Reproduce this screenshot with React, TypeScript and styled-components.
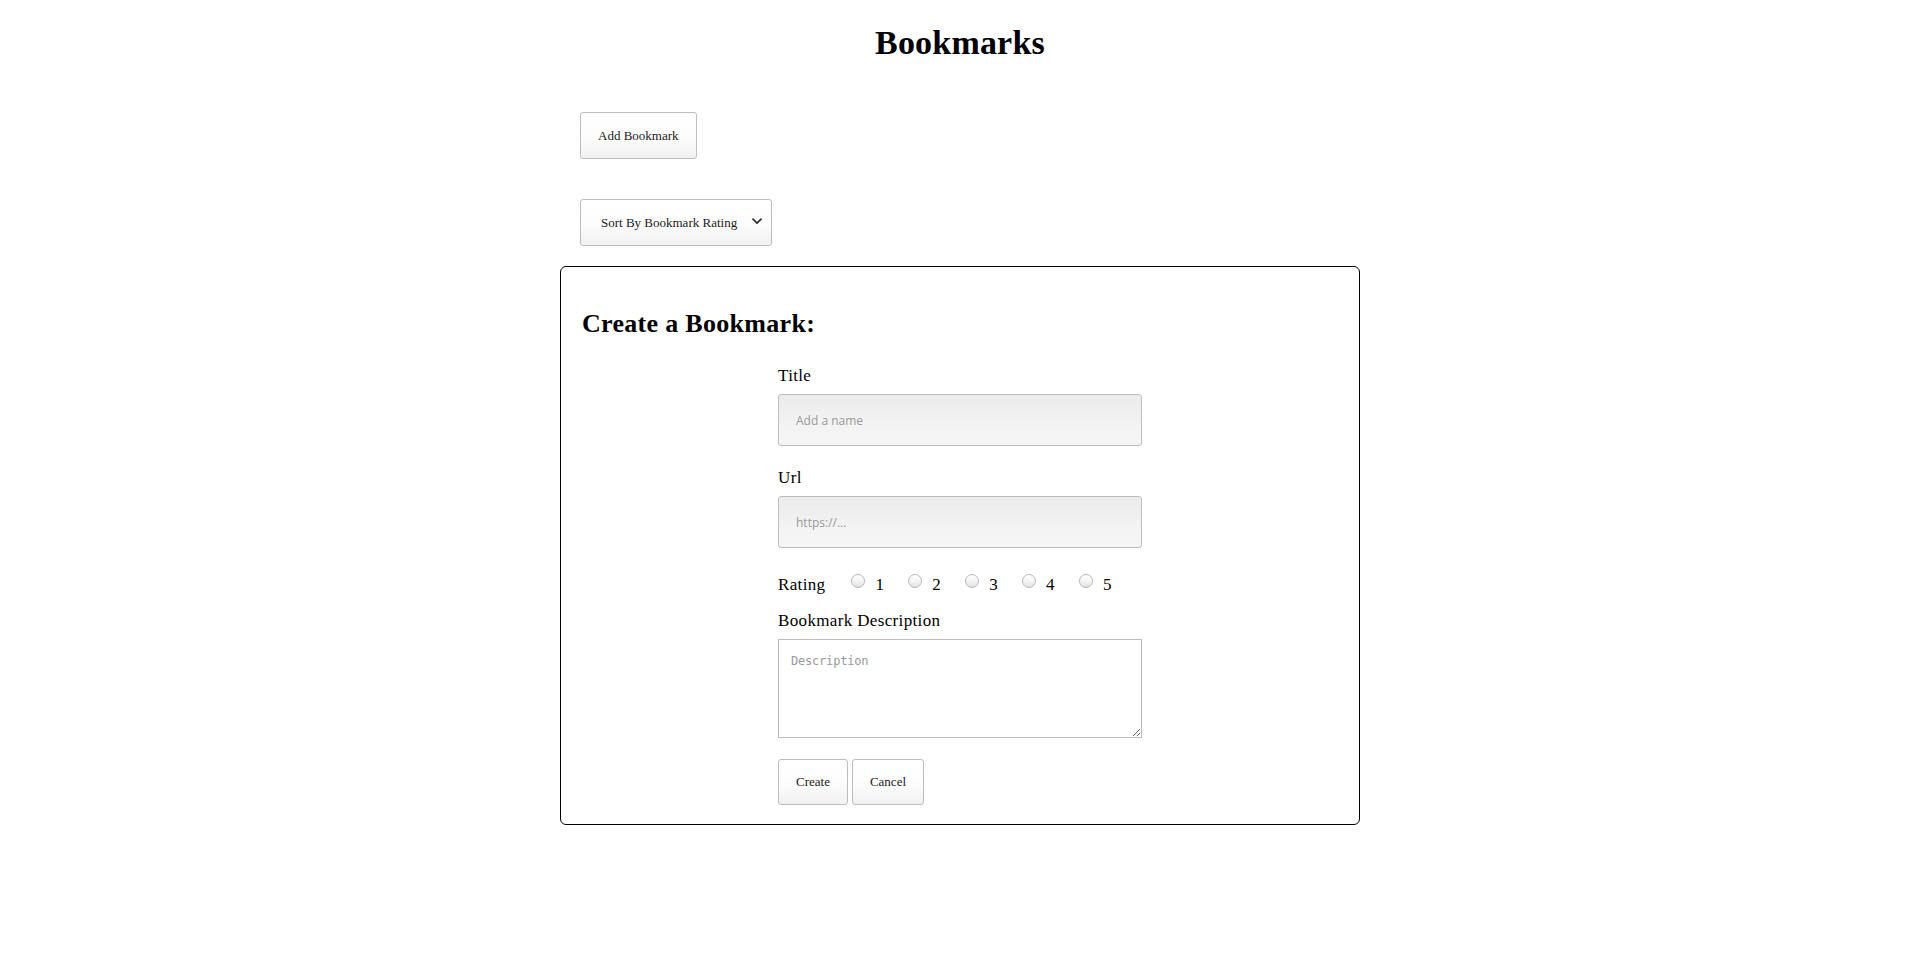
import React from "react";
import styled, { createGlobalStyle } from "styled-components";

const GlobalStyle = createGlobalStyle`
  html, body {
    margin: 0;
    padding: 0;
    background: #ffffff;
  }
  body {
    font-family: "Liberation Serif", "Times New Roman", serif;
    color: #000;
  }
  * { box-sizing: border-box; }
`;

const Page = styled.main`
  width: 800px;
  margin: 0 auto;
  display: flex;
  flex-direction: column;
  padding-top: 23px;
`;

const PageTitle = styled.h1`
  margin: 0;
  font-size: 34px;
  line-height: 40px;
  font-weight: 700;
  text-align: center;
  letter-spacing: 0.2px;
`;

const Controls = styled.div`
  display: flex;
  flex-direction: column;
  align-items: flex-start;
  gap: 40px;
  padding-left: 20px;
  margin-top: 49px;
`;

const Button = styled.button<{ $h?: number }>`
  height: ${(p) => p.$h ?? 47}px;
  padding: 0 17px;
  border: 1px solid #bdbdbd;
  border-radius: 3px;
  background: linear-gradient(to bottom, #ffffff 0%, #fdfdfd 50%, #f1f1f1 100%);
  font-family: "Liberation Serif", "Times New Roman", serif;
  font-size: 13px;
  color: #222;
  cursor: pointer;
`;

const SelectWrap = styled.div`
  position: relative;
  width: 192px;
  height: 47px;
`;

const Select = styled.select`
  appearance: none;
  -webkit-appearance: none;
  width: 100%;
  height: 100%;
  padding: 0 30px 0 20px;
  border: 1px solid #bdbdbd;
  border-radius: 3px;
  background: linear-gradient(to bottom, #ffffff 0%, #fdfdfd 50%, #f1f1f1 100%);
  font-family: "Liberation Serif", "Times New Roman", serif;
  font-size: 13px;
  color: #222;
  outline: none;
`;

const Chevron = styled.svg`
  position: absolute;
  right: 10px;
  top: 19px;
  width: 10px;
  height: 7px;
  pointer-events: none;
`;

const FormCard = styled.section`
  margin-top: 20px;
  border: 1px solid #000;
  border-radius: 6px;
  padding: 42px 21px 19px;
  display: flex;
  flex-direction: column;
`;

const FormHeading = styled.h2`
  margin: 0;
  font-size: 26px;
  line-height: 30px;
  font-weight: 700;
  letter-spacing: 0.3px;
`;

const Form = styled.form`
  width: 364px;
  align-self: center;
  display: flex;
  flex-direction: column;
  margin-top: 25px;
`;

const FieldLabel = styled.label`
  font-size: 17px;
  line-height: 24px;
  letter-spacing: 0.35px;
  margin-bottom: 6px;
`;

const TextInput = styled.input`
  height: 52px;
  width: 100%;
  padding: 0 17px;
  border: 1px solid #bdbdbd;
  border-radius: 3px;
  background: linear-gradient(to bottom, #ebebeb 0%, #f3f3f3 60%, #f6f6f6 100%);
  font-family: "Open Sans", "Noto Sans", sans-serif;
  font-size: 12px;
  color: #333;
  margin-bottom: 20px;
  outline: none;
  &::placeholder {
    color: #9a9a9a;
  }
`;

const RatingRow = styled.div`
  display: flex;
  align-items: center;
  height: 24px;
  margin-top: 5px;
  margin-bottom: 12px;
  font-size: 17px;
  letter-spacing: 0.35px;
`;

const RatingLabel = styled.span`
  margin-right: 26px;
`;

const RatingOption = styled.label`
  display: flex;
  align-items: center;
  gap: 10px;
  margin-right: 24px;
`;

const Radio = styled.input`
  appearance: none;
  -webkit-appearance: none;
  width: 14px;
  height: 14px;
  margin: 0 0 8px 0;
  border: 1px solid #b8b8b8;
  border-radius: 50%;
  background: linear-gradient(to bottom, #ffffff 0%, #f4f4f4 50%, #e4e4e4 100%);
  &:checked {
    background: radial-gradient(circle, #333 0 3px, #f4f4f4 3.5px);
  }
`;

const TextArea = styled.textarea`
  width: 100%;
  height: 99px;
  padding: 13px 12px;
  border: 1px solid #bdbdbd;
  border-radius: 0;
  background: #fff;
  font-family: "DejaVu Sans Mono", "Liberation Mono", monospace;
  font-size: 12px;
  letter-spacing: -0.2px;
  line-height: 16px;
  color: #333;
  outline: none;
  &::placeholder {
    color: #9a9a9a;
  }
`;

const ButtonRow = styled.div`
  display: flex;
  gap: 4px;
  margin-top: 21px;
`;

export default function App() {
  return (
    <>
      <GlobalStyle />
      <Page>
        <PageTitle>Bookmarks</PageTitle>
        <Controls>
          <Button type="button">Add Bookmark</Button>
          <SelectWrap>
            <Select defaultValue="rating">
              <option value="rating">Sort By Bookmark Rating</option>
              <option value="title">Sort By Title</option>
            </Select>
            <Chevron viewBox="0 0 10 7" fill="none">
              <path d="M1 1.2 L5 5.2 L9 1.2" stroke="#333" strokeWidth="1.8" strokeLinecap="round" strokeLinejoin="round" />
            </Chevron>
          </SelectWrap>
        </Controls>
        <FormCard>
          <FormHeading>Create a Bookmark:</FormHeading>
          <Form onSubmit={(e) => e.preventDefault()}>
            <FieldLabel htmlFor="title">Title</FieldLabel>
            <TextInput id="title" type="text" placeholder="Add a name" />
            <FieldLabel htmlFor="url">Url</FieldLabel>
            <TextInput id="url" type="text" placeholder="https://..." />
            <RatingRow>
              <RatingLabel>Rating</RatingLabel>
              {[1, 2, 3, 4, 5].map((n) => (
                <RatingOption key={n}>
                  <Radio type="radio" name="rating" value={n} />
                  {n}
                </RatingOption>
              ))}
            </RatingRow>
            <FieldLabel htmlFor="desc">Bookmark Description</FieldLabel>
            <TextArea id="desc" placeholder="Description" />
            <ButtonRow>
              <Button type="submit" $h={46}>Create</Button>
              <Button type="button" $h={46}>Cancel</Button>
            </ButtonRow>
          </Form>
        </FormCard>
      </Page>
    </>
  );
}
